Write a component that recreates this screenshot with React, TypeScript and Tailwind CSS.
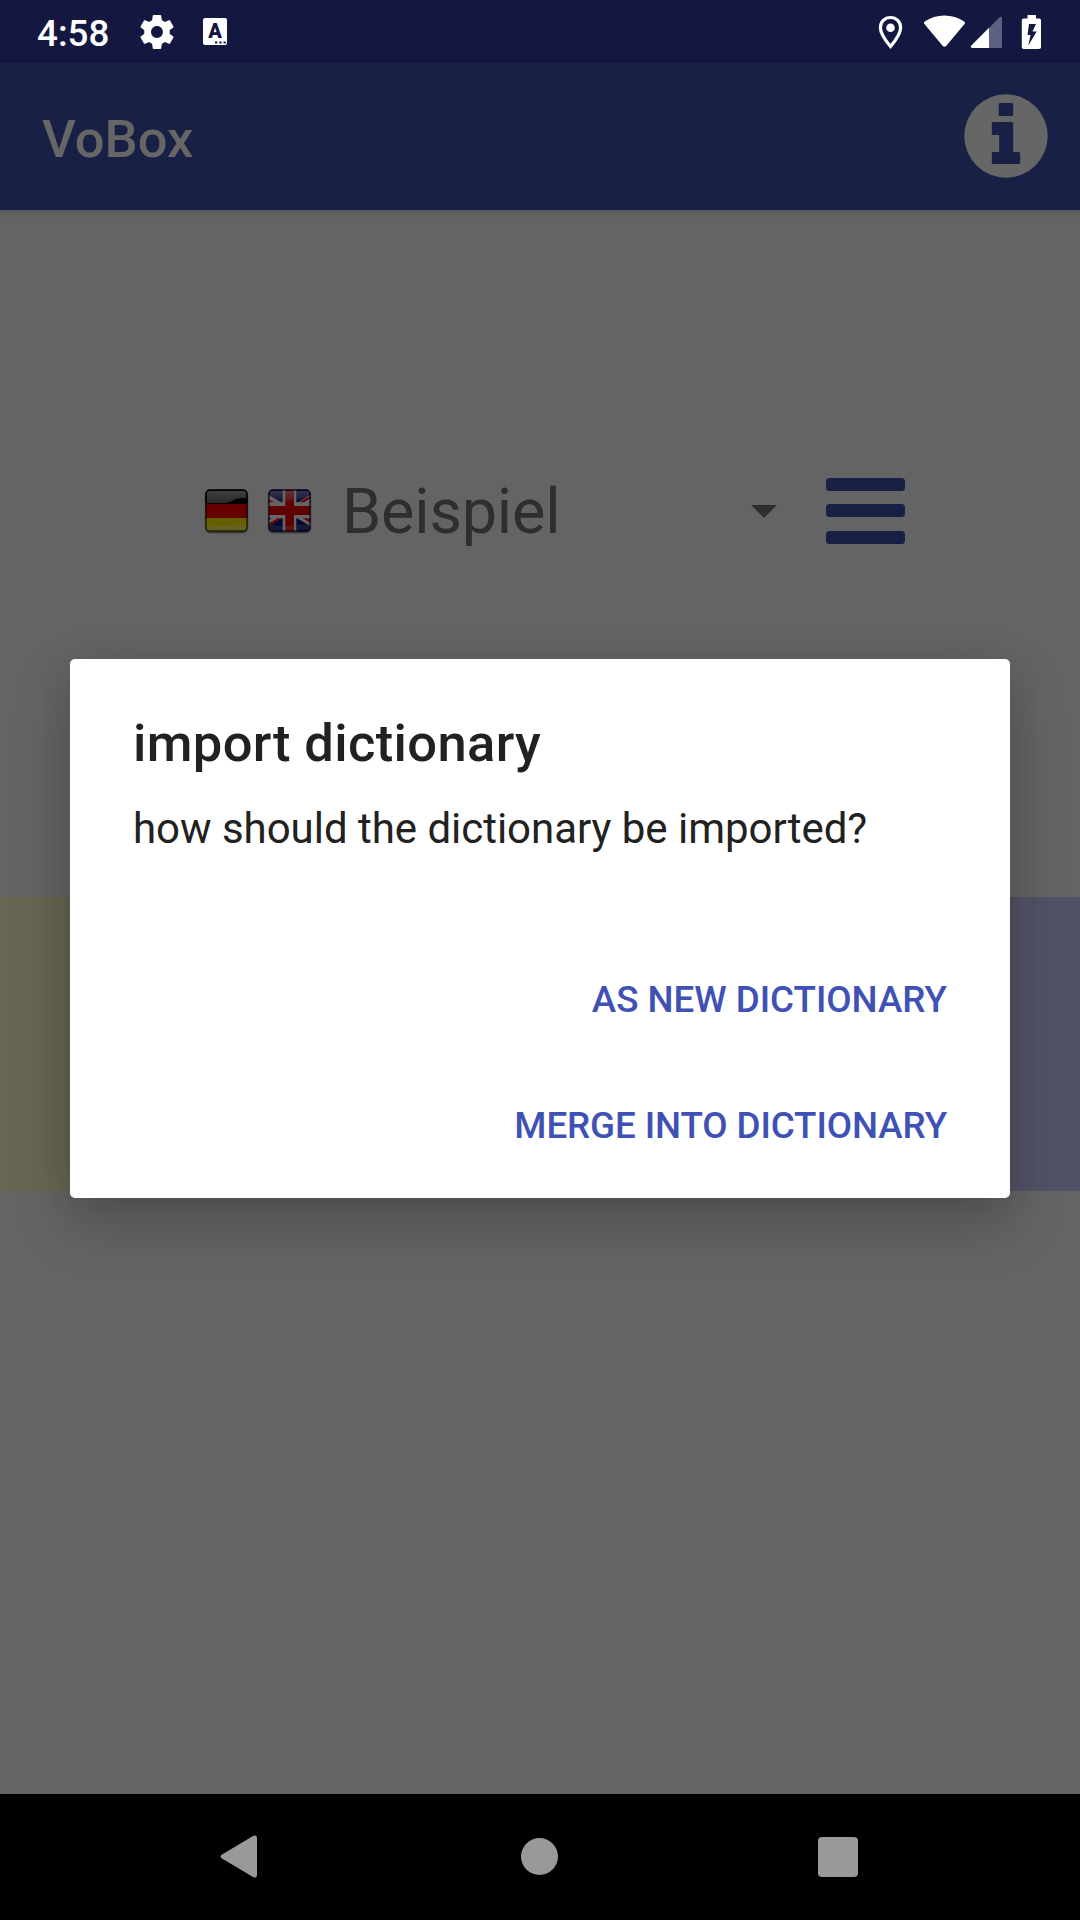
import React from "react";

function StatusBar() {
  return (
    <div className="flex h-[63px] items-center justify-between bg-[#141840] pl-[37px] pr-[39px] text-white">
      <div className="flex items-center">
        <span className="mt-[4px] w-[72px] whitespace-nowrap text-[36.75px] font-medium leading-[43px]">4:58</span>
        <svg className="ml-[31px] h-[34px] w-[34px]" viewBox="2 2 20 20" fill="currentColor">
          <path d="M19.43 12.98c.04-.32.07-.64.07-.98s-.03-.66-.07-.98l2.11-1.65c.19-.15.24-.42.12-.64l-2-3.46c-.12-.22-.39-.3-.61-.22l-2.49 1c-.52-.4-1.08-.73-1.69-.98l-.38-2.65A.488.488 0 0 0 14 2h-4c-.25 0-.46.18-.49.42l-.38 2.65c-.61.25-1.17.59-1.69.98l-2.49-1c-.23-.09-.49 0-.61.22l-2 3.46c-.13.22-.07.49.12.64l2.11 1.65c-.04.32-.07.65-.07.98s.03.66.07.98l-2.11 1.65c-.19.15-.24.42-.12.64l2 3.46c.12.22.39.3.61.22l2.49-1c.52.4 1.08.73 1.69.98l.38 2.65c.03.24.24.42.49.42h4c.25 0 .46-.18.49-.42l.38-2.65c.61-.25 1.17-.59 1.69-.98l2.49 1c.23.09.49 0 .61-.22l2-3.46c.12-.22.07-.49-.12-.64l-2.11-1.65zM12 15.500c-1.930 0-3.500-1.570-3.500-3.500s1.570-3.500 3.500-3.500 3.500 1.570 3.500 3.500-1.570 3.500-3.500 3.500z" />
        </svg>
        <span className="relative ml-[29px] flex h-[27px] w-[24px] items-start justify-center rounded-[2px] bg-white">
          <span className="text-[20px] font-black leading-[26px] text-[#141840]">A</span>
          <svg className="absolute bottom-[1.5px] right-[1px] h-[3px] w-[11px]" viewBox="0 0 11 3" fill="#141840">
            <path d="M0 .5h2.300v2H0zM4.300.5h2.300v2H4.300zM8.500.5h2.300v2H8.500z" />
          </svg>
        </span>
      </div>
      <svg className="h-[34px] w-[163px]" viewBox="878 14 163 34">
        <path d="M890.500 16.500c-5.800 0-10.100 4.500-10.100 10.200 0 6.500 5.600 13.400 10.100 18.800 4.500-5.400 10.100-12.300 10.100-18.800 0-5.700-4.300-10.200-10.100-10.200z" fill="none" stroke="#fff" strokeWidth="3.200" />
        <circle cx="890.500" cy="26.700" r="4.300" fill="#fff" />
        <path d="M924.700 20.600c11-8.300 28.500-8.300 39.500 0 .9.700 1 1.600.3 2.500l-18.300 21.800c-1 1.100-2.400 1.100-3.400 0l-18.400-21.800c-.7-.9-.6-1.800.3-2.500z" fill="#fff" />
        <path d="M999.500 16.300c1.500-1.200 2.500-.5 2.500 1.200v28c0 1-.5 1.500-1.500 1.500H989V27z" fill="#5f6080" />
        <path d="M989 26.800V47h-16.500c-1.700 0-2.200-1.300-1.200-2.400z" fill="#fff" />
        <path fillRule="evenodd" d="M1027.500 14h8.500v3.500h3c1.300 0 2 .7 2 2V46c0 1.300-.7 2-2 2h-15.300c-1.200 0-1.900-.7-1.900-2V19.500c0-1.300.7-2 1.900-2h3.800zM1029 23l-1.500 11h3l-2.200 10.500 8.400-14h-4.200l3.500-7.500z" fill="#fff" />
      </svg>
    </div>
  );
}

function AppBar() {
  return (
    <header className="relative z-10 flex h-[147px] items-center justify-between bg-[#192046] pl-[42px] pr-[32.5px] shadow-[0_2px_8px_rgba(0,0,0,0.16)]">
      <h1 className="mt-[4px] text-[52.5px] font-medium leading-[62px] text-[#666]">VoBox</h1>
      <svg className="mb-px h-[84px] w-[84px]" viewBox="0 0 84 84">
        <circle cx="42" cy="42" r="41.700" fill="#666" />
        <g fill="#192046">
          <rect x="34.700" y="9" width="14.500" height="13" rx="1.500" />
          <path d="M29.300 28h18.400q1.500 0 1.500 1.500V58h5.500q1.500 0 1.500 1.500v9q0 1.500-1.500 1.500H29.300q-1.500 0-1.500-1.500v-9q0-1.500 1.500-1.500h5.900V41h-5.900q-1.500 0-1.500-1.500v-10q0-1.500 1.500-1.500z" />
        </g>
      </svg>
    </header>
  );
}

function GermanFlag() {
  return (
    <svg className="h-[48px] w-[48px]" viewBox="0 0 48 48">
      <defs>
        <clipPath id="de"><rect x="2.500" y="2.500" width="42" height="42" rx="4.500" /></clipPath>
        <linearGradient id="gloss" x1="0" y1="0" x2="0" y2="1">
          <stop offset="0" stopColor="#60645f" stopOpacity=".65" />
          <stop offset="1" stopColor="#555" stopOpacity=".5" />
        </linearGradient>
      </defs>
      <rect x="1.500" y="2.500" width="44" height="44.500" rx="6" fill="#000" opacity=".15" />
      <rect x="2" y="3" width="43" height="43" rx="5" fill="#000" opacity=".35" />
      <g clipPath="url(#de)">
        <path fill="#000" d="M0 0h48v17H0z" />
        <path fill="#660000" d="M0 17h48v14H0z" />
        <path fill="#665f00" d="M0 31h48v17H0z" />
        <path d="M4 6q0-2 2-2h35q2 0 2 2v5c-5 0-9 0-13 2.500C25 17 17 16 4 16z" fill="url(#gloss)" />
        <path d="M4 38c8 0 11 2 18 1s12-2 21-1v4q0 1.500-2 1.500H6q-2 0-2-1.500z" fill="#666" opacity=".3" />
      </g>
      <rect x="3" y="3" width="41" height="41" rx="4" fill="none" stroke="#000" strokeWidth="1.500" opacity=".65" />
    </svg>
  );
}

function BritishFlag() {
  return (
    <svg className="h-[48px] w-[48px]" viewBox="0 0 48 48">
      <defs>
        <clipPath id="gb"><rect x="2.500" y="2.500" width="42" height="42" rx="4.500" /></clipPath>
        <linearGradient id="shine" x1="0" y1="0" x2="0" y2="1">
          <stop offset="0" stopColor="#606068" stopOpacity=".5" />
          <stop offset="1" stopColor="#666" stopOpacity=".12" />
        </linearGradient>
      </defs>
      <rect x="1.500" y="2.500" width="44" height="44.500" rx="6" fill="#000" opacity=".15" />
      <rect x="2" y="3" width="43" height="43" rx="5" fill="#000" opacity=".35" />
      <g clipPath="url(#gb)">
        <path fill="#04072f" d="M0 0h48v48H0z" />
        <path d="M-4 7 51 40M51 7-4 40" stroke="#666" strokeWidth="5.500" />
        <path d="M-4 9.500 20 24M51 6 27 20.500M51 38.500 27 24M-4 42 20 27.500" stroke="#660000" strokeWidth="2.500" />
        <path fill="#666" d="M16.700 0h13.600v48H16.700zM0 15.300h48v16H0z" />
        <path fill="#600000" d="M19.300 0H28v48h-8.700zM0 19h48v9H0z" />
        <path d="M4 4h39v7c-10 0-16 5-39 4z" fill="url(#shine)" />
        <path d="M4 38c8 0 11 2 18 1s12-2 21-1v5H4z" fill="#666" opacity=".2" />
      </g>
      <rect x="3" y="3" width="41" height="41" rx="4" fill="none" stroke="#05061a" strokeWidth="1.500" opacity=".7" />
    </svg>
  );
}

function DictionaryPicker() {
  return (
    <div className="mt-[261px] flex h-[80px] items-center pl-[203px]">
      <GermanFlag />
      <span className="w-[15px]" />
      <BritishFlag />
      <span className="ml-[28px] mt-[2px] w-[410px] text-[63px] leading-[74px] tracking-[-0.2px] text-[#2e2e2e]">Beispiel</span>
      <svg className="-ml-[1.5px] h-[13px] w-[26px]" viewBox="0 0 26 13"><path d="M0 0h26L13 13z" fill="#2e2e2e" /></svg>
      <div className="ml-[49.5px] flex h-[66px] flex-col">
        <span className="h-[13px] w-[79px] rounded-[3.5px] bg-[#192046]" />
        <span className="mt-[13px] h-[13px] w-[79px] rounded-[3.5px] bg-[#192046]" />
        <span className="mt-[14px] h-[13px] w-[79px] rounded-[3.5px] bg-[#192046]" />
      </div>
    </div>
  );
}

function ImportDialog() {
  return (
    <div className="absolute left-[70px] top-[659px] flex h-[539px] w-[940px] flex-col rounded-[5px] bg-white px-[63px] text-[#212121] shadow-[0_24px_56px_rgba(0,0,0,0.22),0_0_36px_rgba(0,0,0,0.06)]">
      <h2 className="mt-[53px] text-[52.5px] font-medium leading-[62px] tracking-[0.36px]">import dictionary</h2>
      <p className="mt-[30px] whitespace-nowrap text-[42px] leading-[50px] tracking-[-0.03px]">how should the dictionary be imported?</p>
      <div className="mt-[83px] flex flex-col items-end text-[36.75px] font-medium text-[#3f51b5]">
        <button className="flex h-[126px] items-center tracking-[-0.02px]">AS NEW DICTIONARY</button>
        <button className="flex h-[126px] items-center tracking-[-0.1px]">MERGE INTO DICTIONARY</button>
      </div>
    </div>
  );
}

function NavigationBar() {
  return (
    <nav className="flex h-[126px] items-center bg-black pb-px pl-[219.5px]">
      <svg className="h-[43px] w-[38px]" viewBox="0 0 38 43">
        <path d="M2 19.500 33 1q4-2 4 2.500v36q0 4.500-4 2.500L2 23.500q-3-2 0-4z" fill="#999" />
      </svg>
      <span className="ml-[263.5px] h-[37px] w-[37px] rounded-full bg-[#999]" />
      <span className="ml-[260px] h-[40px] w-[40px] rounded-[4px] bg-[#999]" />
    </nav>
  );
}

export default function App() {
  return (
    <div className="relative flex h-[1920px] w-[1080px] flex-col overflow-hidden bg-[#646464] font-['Roboto',sans-serif]">
      <StatusBar />
      <AppBar />
      <main className="flex flex-1 flex-col">
        <DictionaryPicker />
        <div className="mt-[346px] flex h-[294px]">
          <span className="flex-1 bg-[#666652]" />
          <span className="flex-1 bg-[#525266]" />
        </div>
      </main>
      <NavigationBar />
      <ImportDialog />
    </div>
  );
}
